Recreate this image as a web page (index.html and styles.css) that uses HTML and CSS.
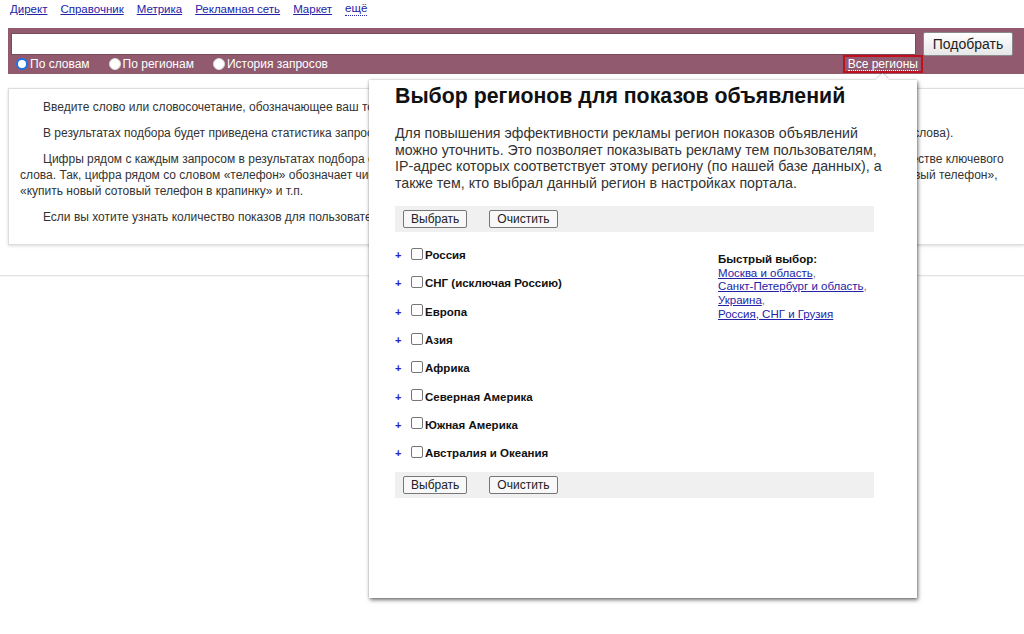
FILE: index.html
```html
<!DOCTYPE html>
<html lang="ru">
<head>
<meta charset="utf-8">
<title>Подбор слов</title>
<link rel="stylesheet" href="styles.css">
</head>
<body>
<div class="nav">
  <a href="#">Директ</a>
  <a href="#">Справочник</a>
  <a href="#">Метрика</a>
  <a href="#">Рекламная сеть</a>
  <a href="#">Маркет</a>
  <a href="#" class="more">ещё</a>
</div>
<div class="band">
  <div class="search-row">
    <input class="search-input" type="text">
    <button class="search-btn">Подобрать</button>
  </div>
  <div class="opts-row">
    <label class="opt"><span class="radio checked"></span>По словам</label>
    <label class="opt"><span class="radio"></span>По регионам</label>
    <label class="opt"><span class="radio"></span>История запросов</label>
    <span class="regions-btn"><span class="dotted">Все регионы</span></span>
  </div>
</div>
<div class="info">
  <p>Введите слово или словосочетание, обозначающее ваш товар или услугу, и нажмите «Подобрать».</p>
  <p>В результатах подбора будет приведена статистика запросов на Яндексе за месяц, включающих выбранное вами слово (словосочетание с учётом формы слова).</p>
  <p>Цифры рядом с каждым запросом в результатах подбора слов дают предварительный прогноз числа показов, если вы выберете это словосочетание в качестве ключевого<br>слова. Так, цифра рядом со словом «телефон» обозначает число показов по запросам со словом «телефон»: «сотовый телефон», «мобильный телефон», «новый телефон»,<br>«купить новый сотовый телефон в крапинку» и т.п.</p>
  <p>Если вы хотите узнать количество показов для пользователей из определённого региона, выберите регион.</p>
</div>
<div class="rule"></div>

<div class="popup">
  <div class="arrow"></div>
  <h1 class="popup-title">Выбор регионов для показов объявлений</h1>
  <p class="popup-text">Для повышения эффективности рекламы регион показов объявлений можно уточнить. Это позволяет показывать рекламу тем пользователям, IP-адрес которых соответствует этому региону (по нашей базе данных), а также тем, кто выбрал данный регион в настройках портала.</p>
  <div class="toolbar">
    <button class="btn">Выбрать</button>
    <button class="btn">Очистить</button>
  </div>
  <div class="regions">
    <ul class="region-list">
      <li><span class="plus">+</span><span class="cb"></span><b>Россия</b></li>
      <li><span class="plus">+</span><span class="cb"></span><b>СНГ (исключая Россию)</b></li>
      <li><span class="plus">+</span><span class="cb"></span><b>Европа</b></li>
      <li><span class="plus">+</span><span class="cb"></span><b>Азия</b></li>
      <li><span class="plus">+</span><span class="cb"></span><b>Африка</b></li>
      <li><span class="plus">+</span><span class="cb"></span><b>Северная Америка</b></li>
      <li><span class="plus">+</span><span class="cb"></span><b>Южная Америка</b></li>
      <li><span class="plus">+</span><span class="cb"></span><b>Австралия и Океания</b></li>
    </ul>
    <div class="quick">
      <div class="quick-title">Быстрый выбор:</div>
      <div><a href="#">Москва и область</a>,</div>
      <div><a href="#">Санкт-Петербург и область</a>,</div>
      <div><a href="#">Украина</a>,</div>
      <div><a href="#">Россия, СНГ и Грузия</a></div>
    </div>
  </div>
  <div class="toolbar bottom">
    <button class="btn">Выбрать</button>
    <button class="btn">Очистить</button>
  </div>
</div>
</body>
</html>
```
FILE: styles.css
```css
html, body {
  margin: 0;
  padding: 0;
  background: #fff;
  font-family: "Liberation Sans", Arial, sans-serif;
  color: #222;
}
body {
  position: relative;
  width: 1024px;
  height: 634px;
  overflow: hidden;
}
.nav {
  display: flex;
  gap: 13px;
  padding: 2px 0 0 10px;
  height: 26px;
  box-sizing: border-box;
  font-size: 11.5px;
  line-height: 15px;
}
.nav a {
  color: #2323a8;
  text-decoration: underline;
}
.nav a.more {
  text-decoration: none;
  border-bottom: 1px dotted #2323a8;
  line-height: 13px;
  height: 13px;
}
.band {
  margin: 2px 0 0 8px;
  height: 46px;
  background: #915a6f;
  box-sizing: border-box;
  padding: 4px 0 0 3px;
}
.search-row {
  display: flex;
  align-items: flex-start;
  gap: 7px;
}
.search-input {
  width: 905px;
  height: 22px;
  box-sizing: border-box;
  border: 1px solid #7a4a5c;
  background: #fff;
  margin: 1px 0 0 0;
  padding: 0 4px;
  outline: none;
}
.search-btn {
  width: 90px;
  height: 24px;
  font-family: "Liberation Sans", Arial, sans-serif;
  font-size: 14px;
  color: #222;
  background: linear-gradient(#fff, #e6e6e6);
  border: 1px solid #8a8a8a;
  border-radius: 2px;
  padding: 0;
}
.opts-row {
  display: flex;
  align-items: center;
  height: 18px;
  margin-top: -1px;
  padding-left: 5px;
  font-size: 12px;
  color: #fff;
}
.opt {
  display: flex;
  align-items: center;
  gap: 2px;
  margin-right: 19px;
}
.radio {
  width: 12px;
  height: 12px;
  border-radius: 50%;
  background: #fff;
  box-sizing: border-box;
  border: 1px solid #d8d8d8;
}
.radio.checked {
  border: 2px solid #1a73e8;
  background: #fff;
  box-shadow: inset 0 0 0 2px #fff;
}
.regions-btn {
  margin-left: auto;
  margin-right: 101px;
  border: 2px solid #c0101c;
  padding: 0 3px;
  height: 18px;
  box-sizing: border-box;
  line-height: 13px;
  display: flex;
  align-items: center;
}
.dotted {
  border-bottom: 1px dotted #fff;
  line-height: 12px;
}
.info {
  margin: 14px 0 0 8px;
  border: 1px solid #ddd;
  border-right: none;
  box-shadow: 0 1px 3px rgba(0,0,0,0.15);
  padding: 10px 0 10px 11px;
  font-size: 12px;
  line-height: 16px;
  color: #333;
  height: 157px;
  box-sizing: border-box;
  overflow: hidden;
}
.info p {
  margin: 0 0 10px;
  text-indent: 23px;
  white-space: nowrap;
}
.rule {
  margin-top: 30px;
  border-top: 1px solid #e2e2e2;
  box-shadow: 0 1px 1px rgba(0,0,0,0.04);
}
.popup {
  position: absolute;
  left: 369px;
  top: 80px;
  width: 548px;
  height: 518px;
  box-sizing: border-box;
  background: #fff;
  box-shadow: 1px 2px 4px rgba(0,0,0,0.55), 0 0 2px rgba(0,0,0,0.2);
  padding: 4px 6px 0 26px;
}
.arrow {
  position: absolute;
  top: -5px;
  left: 509px;
  width: 9px;
  height: 9px;
  background: #fff;
  transform: rotate(45deg);
  box-shadow: -1px -1px 1px rgba(0,0,0,0.15);
}
.popup-title {
  margin: 0;
  font-size: 21.3px;
  line-height: 24px;
  font-weight: bold;
  color: #111;
  position: relative;
}
.popup-text {
  margin: 17px 0 0;
  width: 495px;
  font-size: 14.2px;
  line-height: 16.5px;
  color: #333;
}
.toolbar {
  margin-top: 15px;
  width: 479px;
  height: 26px;
  background: #f0f0f0;
  display: flex;
  align-items: center;
  gap: 22px;
  padding-left: 8px;
  box-sizing: border-box;
}
.btn {
  height: 18px;
  padding: 0 7px;
  font-family: "Liberation Sans", Arial, sans-serif;
  font-size: 12px;
  color: #222;
  background: #f8f8f8;
  border: 1px solid #767676;
  border-radius: 2px;
  line-height: 16px;
}
.regions {
  display: flex;
  margin-top: 9px;
}
.region-list {
  list-style: none;
  margin: 0;
  padding: 0;
  width: 323px;
}
.region-list li {
  display: flex;
  align-items: center;
  height: 28.3px;
  font-size: 11.5px;
  color: #111;
}
.plus {
  color: #2323c8;
  font-weight: bold;
  font-size: 11px;
  width: 16px;
  padding-left: 0;
  box-sizing: border-box;
}
.cb {
  width: 12px;
  height: 12px;
  border: 1px solid #767676;
  border-radius: 2px;
  box-sizing: border-box;
  margin-right: 2px;
  margin-top: -3px;
}
.quick {
  font-size: 11.5px;
  line-height: 13.7px;
  color: #777;
  padding-top: 12px;
}
.quick-title {
  font-weight: bold;
  color: #111;
}
.quick a {
  color: #2323a8;
  text-decoration: underline;
}
.toolbar.bottom {
  margin-top: 5px;
}
```
